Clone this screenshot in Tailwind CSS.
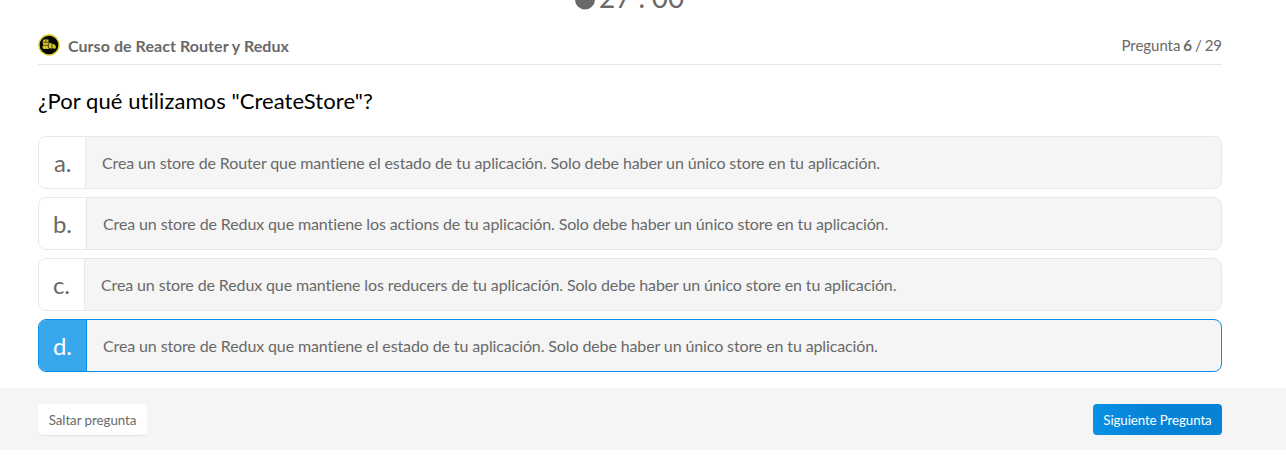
<!DOCTYPE html>
<html lang="es"><head><meta charset="utf-8"><script src="https://cdn.jsdelivr.net/npm/@tailwindcss/browser@4"></script></head>
<body class="h-[461px] overflow-hidden bg-white font-['Lato',sans-serif] text-base text-[#696969]">
<div class="flex h-[28px] items-start overflow-hidden pl-[575px]">
<div class="-mt-[21px] flex items-center gap-[4px] text-[28px] leading-[36px] [word-spacing:-0.5px]"><svg class="mt-[7px] h-5 w-5" viewBox="0 0 20 20"><circle cx="10" cy="8.5" r="10" fill="#696969"/></svg><span>27 : 00</span></div></div>
<main class="ml-[38px] w-[1184px]">
<header class="flex h-[37px] items-center justify-between border-b border-[#e8e8e8]">
<div class="flex items-center gap-2"><svg class="-mt-0.5 h-[22px] w-[22px]" viewBox="0 0 22 22"><circle cx="11" cy="11" r="10" fill="#050500" stroke="#d8ca24" stroke-width="1.3"/><path d="M5.5 5.5h5v3l6 2q2 1.2 1.3 3.5-1.2 1.5-3 0-1.5 1.2-3 0-1.2 1.5-3 .8-4 .9-4.4-1.3 0-1.7.8-2.3Q3.8 8 5.5 5.5" fill="#d4c52a"/><path d="M5.2 8.3h5M4.8 11.3l5.2.1M10.4 8.5v5.7M14 10.2v3.8M7.8 6v2" stroke="#252300" stroke-width=".7"/></svg><span class="font-bold tracking-[0.06px]">Curso de React Router y Redux</span></div>
<div class="-mt-0.5 text-[15px] tracking-[-0.05px] [word-spacing:-0.8px]">Pregunta <b>6</b> / 29</div></header>
<h1 class="flex h-[71px] items-center text-[22px] tracking-[0.07px] text-black">¿Por qué utilizamos "CreateStore"?</h1>
<div class="flex flex-col gap-2 tracking-[-0.117px]">
<div class="flex h-[53px] overflow-hidden rounded-lg border border-[#e8e8e8] bg-[#f5f5f5]"><span class="flex w-[47px] items-center border-r border-[#e8e8e8] bg-white pl-[15px] text-2xl">a.</span><p class="flex items-center px-4">Crea un store de Router que mantiene el estado de tu aplicación. Solo debe haber un único store en tu aplicación.</p></div>
<div class="flex h-[53px] overflow-hidden rounded-lg border border-[#e8e8e8] bg-[#f5f5f5]"><span class="flex w-[48px] items-center border-r border-[#e8e8e8] bg-white pl-[14px] text-2xl">b.</span><p class="flex items-center px-4">Crea un store de Redux que mantiene los actions de tu aplicación. Solo debe haber un único store en tu aplicación.</p></div>
<div class="flex h-[53px] overflow-hidden rounded-lg border border-[#e8e8e8] bg-[#f5f5f5]"><span class="flex w-[46px] items-center border-r border-[#e8e8e8] bg-white pl-[14px] text-2xl">c.</span><p class="flex items-center px-4">Crea un store de Redux que mantiene los reducers de tu aplicación. Solo debe haber un único store en tu aplicación.</p></div>
<div class="flex h-[53px] overflow-hidden rounded-lg border border-[#0791e6] bg-[#f5f5f5]"><span class="flex w-[48px] items-center border-r border-[#0791e6] bg-[#39a7eb] pl-[14px] text-2xl text-white">d.</span><p class="flex items-center px-4">Crea un store de Redux que mantiene el estado de tu aplicación. Solo debe haber un único store en tu aplicación.</p></div>
</div></main>
<footer class="mt-4 flex h-[62px] items-center justify-between bg-[#f5f5f5] pr-16 pl-[38px] text-[13.33px] tracking-[-0.05px]">
<button class="h-[31px] w-[109px] rounded bg-white pt-[3px] whitespace-nowrap shadow-[0_1px_1px_#00000012]">Saltar pregunta</button><button class="h-[31px] w-[129px] rounded bg-linear-to-r from-[#0791e6] to-[#0783d6] to-40% pt-[3px] tracking-[-0.1px] whitespace-nowrap text-white">Siguiente Pregunta</button></footer>
</body></html>
